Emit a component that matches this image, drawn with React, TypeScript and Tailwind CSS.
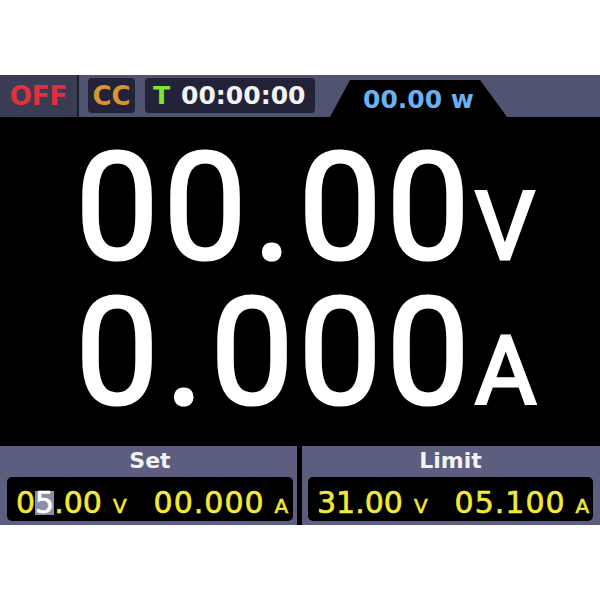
import React from 'react';

const SANS = "font-['DejaVu_Sans',sans-serif]";

function BigNumber({ text }: { text: string }) {
  return (
    <>
      {text.split('').map((c, i) => (
        <span
          key={i}
          className={c === '.' ? 'inline-block w-[47px] text-center' : 'inline-block w-[88px] text-center'}
        >
          {c}
        </span>
      ))}
    </>
  );
}

function Header() {
  return (
    <div className={`h-[42px] bg-[#50536f] flex ${SANS} font-bold`}>
      {/* output state */}
      <div className="w-[77px] bg-[#393c52] flex items-center justify-center text-[26px] text-[#e3303c] leading-none">
        OFF
      </div>
      <div className="w-[2px] bg-[#1c1d2b]" />

      {/* mode */}
      <div className="ml-[9px] mt-[3px] h-[35px] w-[47px] rounded-[4px] bg-[#222338] flex items-center justify-center text-[26px] text-[#d8952f] leading-none">
        CC
      </div>

      {/* timer */}
      <div className="ml-[10px] mt-[3px] h-[35px] w-[170px] rounded-[4px] bg-[#222338] flex items-center pl-[8px] text-[25px] leading-none">
        <span className="text-[#80e632]">T</span>
        <span className="ml-[11px] text-[#f2f2f2]">00:00:00</span>
      </div>

      {/* power tab */}
      <div className="ml-[15px] self-end h-[37px] w-[177px] bg-black [clip-path:polygon(20px_0,150px_0,100%_100%,0_100%)] flex items-center justify-center pt-[2px] text-[25px] text-[#6cb0f4] leading-none">
        00.00 w
      </div>
    </div>
  );
}

function Readout() {
  return (
    <div className="h-[329px] bg-black text-white font-['Roboto',sans-serif] font-normal [-webkit-text-stroke:3px_white] pt-[22px]">
      <div className="h-[145px] flex items-baseline pl-[73px]">
        <span className="text-[148px] leading-[140px]">
          <BigNumber text="00.00" />
        </span>
        <span className="ml-[3px] text-[94px] leading-none">V</span>
      </div>
      <div className="h-[145px] flex items-baseline pl-[73px]">
        <span className="text-[148px] leading-[140px]">
          <BigNumber text="0.000" />
        </span>
        <span className="ml-[3px] text-[94px] leading-none">A</span>
      </div>
    </div>
  );
}

function SetPanel({
  label,
  volts,
  amps,
  className,
  highlight,
}: {
  label: string;
  volts: string;
  amps: string;
  className: string;
  highlight?: boolean;
}) {
  return (
    <div className={`bg-[#5b5e7e] flex flex-col ${className}`}>
      <div className={`pt-[4px] text-center text-[22px] leading-none font-bold text-[#f2f2f2] ${SANS}`}>
        {label}
      </div>
      <div
        className={`mt-[5px] h-[44px] rounded-[5px] bg-black flex items-baseline pt-[11px] pl-[9px] text-[#f3e936] [-webkit-text-stroke:0.6px_#f3e936] ${SANS}`}
      >
        <span className="text-[30px] leading-none">
          {highlight ? (
            <>
              {volts[0]}
              <span className="inline-block h-[24px] leading-[24px] bg-[#8a8eab] text-white [-webkit-text-stroke:0.6px_white]">
                {volts[1]}
              </span>
              {volts.slice(2)}
            </>
          ) : (
            volts
          )}
        </span>
        <span className="ml-[11px] text-[20px] leading-none">V</span>
        <span className="ml-[27px] text-[30px] leading-none tracking-[1px]">{amps}</span>
        <span className="ml-[10px] text-[20px] leading-none">A</span>
      </div>
    </div>
  );
}

export default function App() {
  return (
    <div className="w-[600px] h-[600px] bg-white flex flex-col">
      <div className="h-[75px]" />
      <Header />
      <Readout />
      <div className="h-[79px] flex">
        <SetPanel
          label="Set"
          volts="05.00"
          amps="00.000"
          className="w-[297px] pl-[7px] pr-[4px] pb-[4px]"
          highlight
        />
        <div className="w-[5px] bg-black" />
        <SetPanel
          label="Limit"
          volts="31.00"
          amps="05.100"
          className="flex-1 pl-[6px] pr-[7px] pb-[4px]"
        />
      </div>
    </div>
  );
}
